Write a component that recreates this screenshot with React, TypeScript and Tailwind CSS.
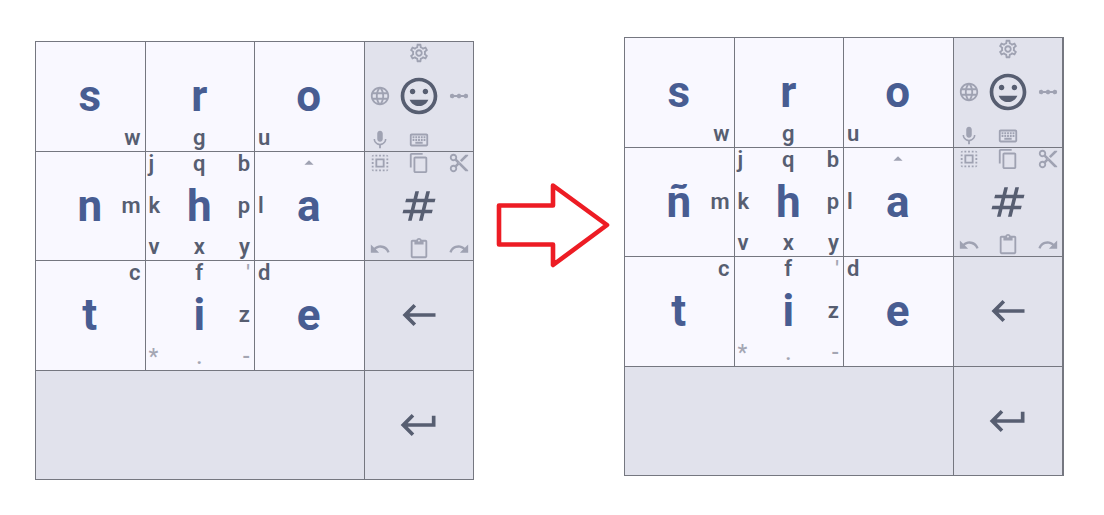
import type { ReactNode } from "react";
import {
  MdArrowDropUp,
  MdContentCopy,
  MdContentCut,
  MdContentPaste,
  MdKeyboardBackspace,
  MdKeyboardReturn,
  MdLanguage,
  MdLinearScale,
  MdMic,
  MdMood,
  MdOutlineKeyboard,
  MdOutlineNumbers,
  MdOutlineSettings,
  MdRedo,
  MdSelectAll,
  MdUndo,
} from "react-icons/md";

type Slot = "tl" | "t" | "tr" | "l" | "c" | "r" | "bl" | "b" | "br";
type KeyDef = {
  name: string;
  tone: "letter" | "control";
  slots: Partial<Record<Slot, ReactNode>>;
};

const slotClasses: Record<Slot, string> = {
  tl: "col-start-1 row-start-1 justify-start leading-[24px]",
  t: "col-start-2 row-start-1 justify-center leading-[24px]",
  tr: "col-start-3 row-start-1 justify-end leading-[24px]",
  l: "col-start-1 row-start-2 justify-start items-center",
  c: "col-start-2 row-start-2 justify-center items-center text-[44px] leading-[44px] font-bold",
  r: "col-start-3 row-start-2 justify-end items-center",
  bl: "col-start-1 row-start-3 justify-start [&>svg]:self-end",
  b: "col-start-2 row-start-3 justify-center [&>svg]:self-end",
  br: "col-start-3 row-start-3 justify-end [&>svg]:self-end",
};

const slotOrder: Slot[] = ["tl", "t", "tr", "l", "c", "r", "bl", "b", "br"];

function Faint({ children }: { children: ReactNode }) {
  return <span className="font-medium text-[#a4a6b3]">{children}</span>;
}

const letter = (
  main: string,
  slots: Partial<Record<Slot, ReactNode>>,
): KeyDef => ({
  name: main,
  tone: "letter",
  slots: { c: <span className="text-[#485d92]">{main}</span>, ...slots },
});

const small = "size-[22px] text-[#9fa2b2]";
const large = "size-11 text-[#575e71]";

const buildKeys = (nasal: string): KeyDef[] => [
  letter("s", { br: "w" }),
  letter("r", { b: "g" }),
  letter("o", { bl: "u" }),
  {
    name: "Emoji",
    tone: "control",
    slots: {
      t: <MdOutlineSettings className={small} />,
      l: <MdLanguage className={small} />,
      c: <MdMood className={large} />,
      r: <MdLinearScale className={small} />,
      bl: <MdMic className={small} />,
      b: <MdOutlineKeyboard className={small} />,
    },
  },
  letter(nasal, { r: "m" }),
  letter("h", { tl: "j", t: "q", tr: "b", l: "k", r: "p", bl: "v", b: "x", br: "y" }),
  letter("a", { l: "l", t: <MdArrowDropUp className={small} /> }),
  {
    name: "Numbers",
    tone: "control",
    slots: {
      tl: <MdSelectAll className={small} />,
      t: <MdContentCopy className={small} />,
      tr: <MdContentCut className={small} />,
      c: <MdOutlineNumbers className={large} />,
      bl: <MdUndo className={small} />,
      b: <MdContentPaste className={small} />,
      br: <MdRedo className={small} />,
    },
  },
  letter("t", { tr: "c" }),
  letter("i", {
    t: "f",
    tr: <Faint>'</Faint>,
    r: "z",
    bl: <Faint>*</Faint>,
    b: <Faint>.</Faint>,
    br: <Faint>-</Faint>,
  }),
  letter("e", { tl: "d" }),
  {
    name: "Backspace",
    tone: "control",
    slots: { c: <MdKeyboardBackspace className={large} /> },
  },
];

function Key({ def }: { def: KeyDef }) {
  const tone =
    def.tone === "letter"
      ? "bg-[#f9f8ff] pr-1 pl-[3px]"
      : "bg-[#e1e2ec] pr-[3px] pl-1";
  return (
    <button
      type="button"
      aria-label={def.name}
      className={`grid min-h-0 min-w-0 grid-cols-[1fr_44px_1fr] grid-rows-[24px_1fr_24px] text-[22px] leading-[22px] font-semibold text-[#575e71] ${tone}`}
    >
      {slotOrder.map((slot) =>
        def.slots[slot] ? (
          <span key={slot} className={`flex ${slotClasses[slot]}`}>
            {def.slots[slot]}
          </span>
        ) : null,
      )}
    </button>
  );
}

function Keyboard({ nasal, frame }: { nasal: string; frame: string }) {
  return (
    <div
      className={`grid grid-cols-4 grid-rows-4 gap-px border-[#757780] bg-[#757780] ${frame}`}
    >
      {buildKeys(nasal).map((def) => (
        <Key key={def.name} def={def} />
      ))}
      <button type="button" aria-label="Space" className="col-span-3 bg-[#e1e2ec]" />
      <Key
        def={{
          name: "Enter",
          tone: "control",
          slots: { c: <MdKeyboardReturn className={large} /> },
        }}
      />
    </div>
  );
}

export default function App() {
  return (
    <main className="grid min-h-screen grid-cols-[439fr_150fr_440fr] items-start bg-white pt-[37px] pr-10 pl-[35px] font-[Roboto,sans-serif]">
      <div className="pt-1">
        <Keyboard nasal="n" frame="aspect-square border" />
      </div>
      <svg
        viewBox="0 0 150 88"
        className="w-full self-start pt-36"
        fill="none"
        stroke="#ed1c24"
        strokeWidth="4.6"
        aria-hidden="true"
      >
        <path d="M25 24.5H79V4.5L133 44 79 84V63.5H25Z" strokeLinejoin="round" />
      </svg>
      <Keyboard nasal="ñ" frame="aspect-[440/439] border border-r-2" />
    </main>
  );
}
